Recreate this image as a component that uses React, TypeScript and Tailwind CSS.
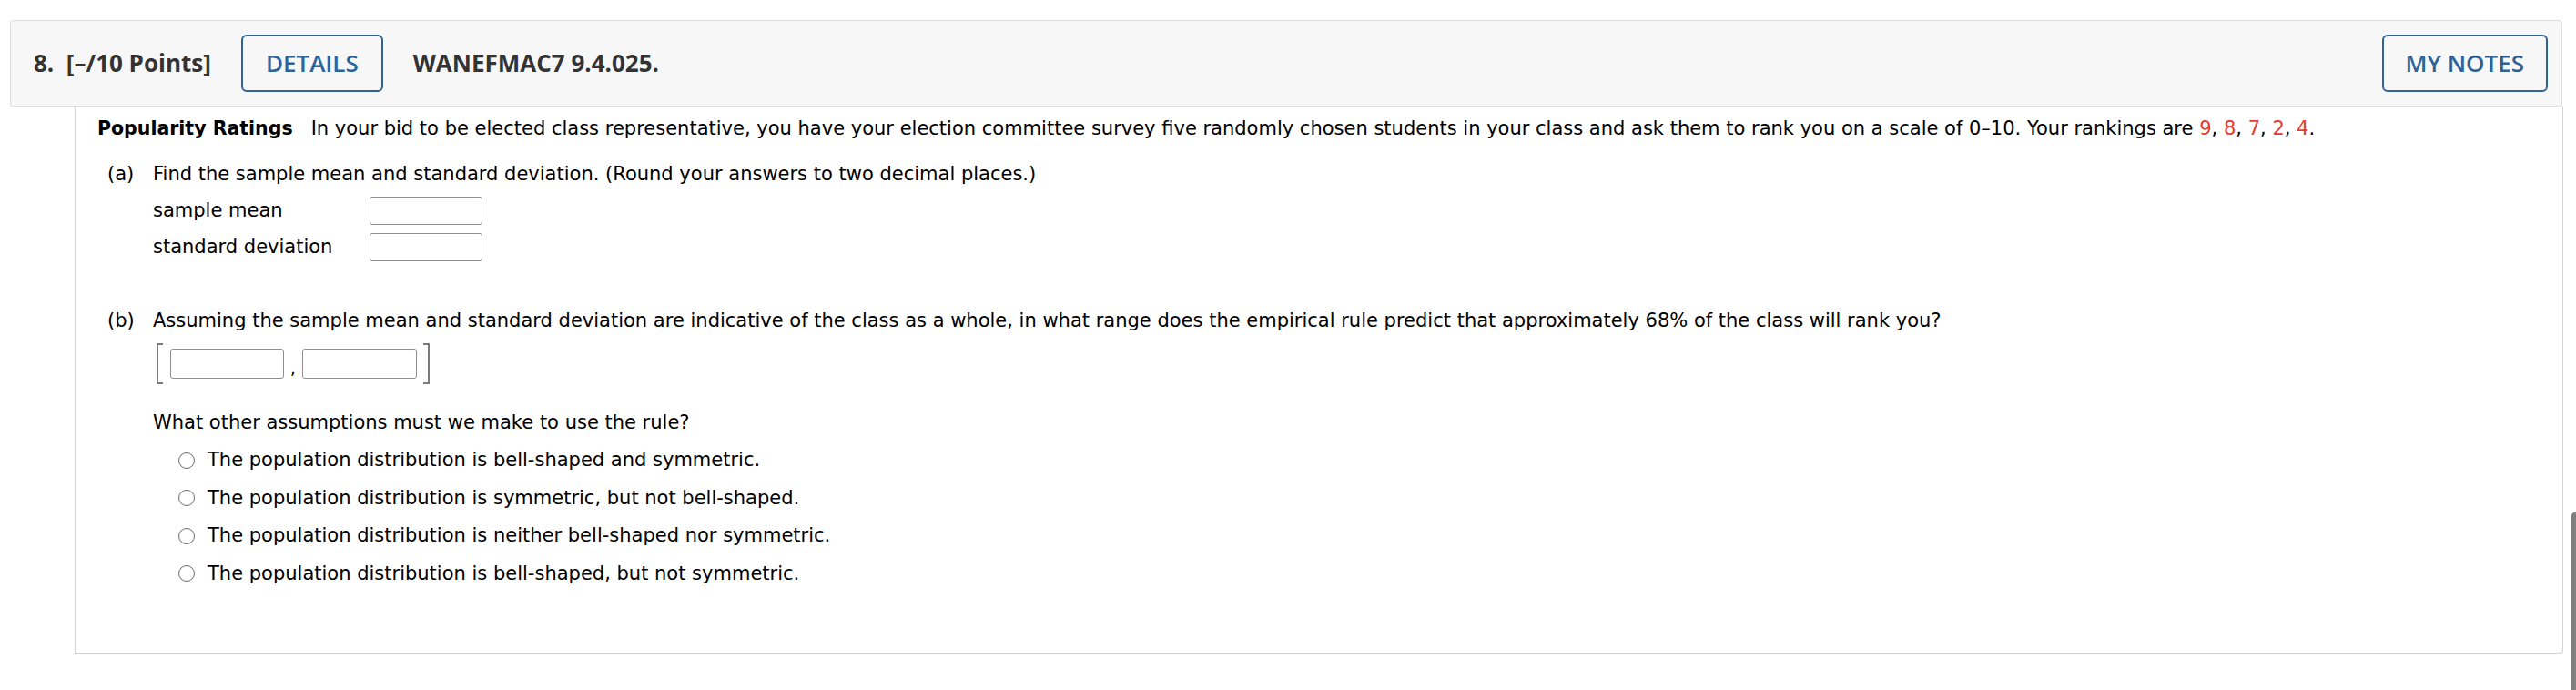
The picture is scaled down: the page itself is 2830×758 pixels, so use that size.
import React from "react";

const body = { fontFamily: '"DejaVu Sans", Verdana, sans-serif' };
const head = { fontFamily: '"Open Sans", sans-serif' };

function Radio({ children }: { children: React.ReactNode }) {
  return (
    <div className="flex h-[41.5px] items-center">
      <span className="ml-[89px] mr-[14px] box-border h-[18px] w-[18px] rounded-full border border-[#6b6b6b] bg-white" />
      <span>{children}</span>
    </div>
  );
}

function Box({ w = 124, h = 31 }: { w?: number; h?: number }) {
  return (
    <span
      className="box-border inline-block rounded-[3px] border border-[#8f8f8f] bg-white"
      style={{ width: w, height: h }}
    />
  );
}

export default function App() {
  const red = "text-[#e53a2f]";
  return (
    <div className="relative h-[758px] w-[2830px] overflow-hidden bg-white">
      {/* header */}
      <div
        className="ml-[11px] mt-[22px] box-border flex h-[95px] w-[2804px] items-center rounded-t-[4px] border border-[#dcdcdc] bg-[#f7f7f7] pl-[25px] pr-[15px] text-[26px] text-[#333]"
        style={head}
      >
        <span className="font-bold whitespace-pre">8.  [–/10 Points]</span>
        <button className="ml-[33px] box-border flex h-[63px] items-center rounded-[6px] border-2 border-[#2d6399] px-[25px] font-semibold text-[#2d6399]">
          DETAILS
        </button>
        <span className="ml-[33px] font-bold">WANEFMAC7 9.4.025.</span>
        <div className="flex-1" />
        <button className="box-border flex h-[63px] items-center rounded-[6px] border-2 border-[#2d6399] px-[24px] font-semibold text-[#2d6399]">
          MY NOTES
        </button>
      </div>

      {/* content */}
      <div
        className="ml-[82px] box-border h-[601px] w-[2734px] rounded-br-[4px] border-x border-b border-[#d4d4d4] pl-[24px] pt-[11px] text-[21px] leading-[27px] text-black"
        style={body}
      >
        <p>
          <span className="text-[20.5px] font-bold">Popularity Ratings</span>
          <span className="whitespace-pre">   </span>
          In your bid to be elected class representative, you have your election committee survey five randomly chosen students in your class and ask them to rank you on a scale of 0–10. Your rankings are{" "}
          <span className={red}>9</span>, <span className={red}>8</span>, <span className={red}>7</span>,{" "}
          <span className={red}>2</span>, <span className={red}>4</span>.
        </p>

        {/* (a) */}
        <div className="mt-[23px] flex">
          <span className="ml-[11px] w-[50px]">(a)</span>
          <span>Find the sample mean and standard deviation. (Round your answers to two decimal places.)</span>
        </div>
        <div className="ml-[61px] mt-[11px] flex flex-col gap-[9px]">
          <div className="flex items-center">
            <span className="w-[238px]">sample mean</span>
            <Box />
          </div>
          <div className="flex items-center">
            <span className="w-[238px]">standard deviation</span>
            <Box />
          </div>
        </div>

        {/* (b) */}
        <div className="mt-[52px] flex">
          <span className="ml-[11px] w-[50px]">(b)</span>
          <span>
            Assuming the sample mean and standard deviation are indicative of the class as a whole, in what range does the empirical rule predict that approximately 68% of the class will rank you?
          </span>
        </div>
        <div className="ml-[65px] mt-[11px] flex h-[45px] items-center">
          <span className="box-border h-[45px] w-[7px] border-y-2 border-l-2 border-[#7b7b7b]" />
          <span className="ml-[8px] flex">
            <Box w={125} h={33} />
          </span>
          <span className="mx-[7px] self-end pb-[8px] text-[18px] leading-[18px]">,</span>
          <Box w={126} h={33} />
          <span className="ml-[7px] box-border h-[45px] w-[7px] border-y-2 border-r-2 border-[#7b7b7b]" />
        </div>

        <p className="ml-[61px] mt-[29px]">What other assumptions must we make to use the rule?</p>
        <div className="mt-[7px]">
          <Radio>The population distribution is bell-shaped and symmetric.</Radio>
          <Radio>The population distribution is symmetric, but not bell-shaped.</Radio>
          <Radio>The population distribution is neither bell-shaped nor symmetric.</Radio>
          <Radio>The population distribution is bell-shaped, but not symmetric.</Radio>
        </div>
      </div>

      {/* scrollbar thumb */}
      <div className="absolute right-0 top-[563px] h-[200px] w-[5px] rounded-tl-[4px] bg-[#7f7f7f]" />
    </div>
  );
}
